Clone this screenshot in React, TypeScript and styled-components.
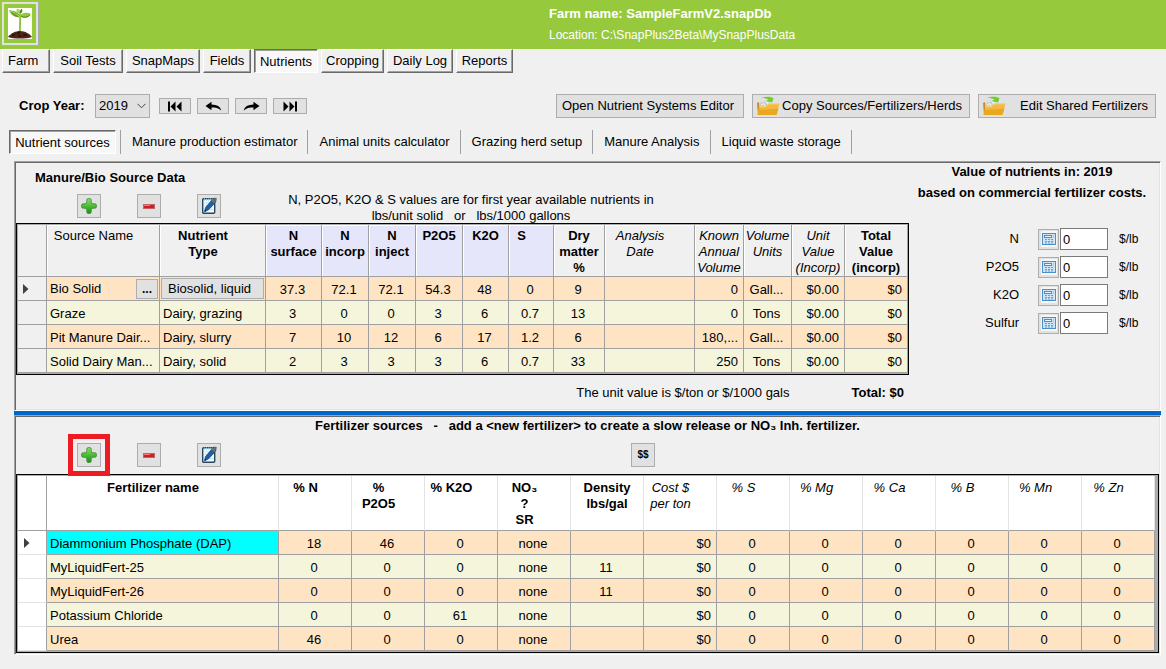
import React from 'react';
import styled, { createGlobalStyle, css } from 'styled-components';

const GlobalStyle = createGlobalStyle`
  * { box-sizing: border-box; }
  body {
    margin: 0;
    background: #f0f0f0;
    color: #000;
    font-family: "Liberation Sans", Arial, sans-serif;
    font-size: 13px;
    line-height: 16px;
  }
  button, input, select { font: inherit; color: inherit; margin: 0; border-radius: 0; }
`;

const Page = styled.div`
  min-width: 1100px;
  padding-bottom: 14px;
`;

const Banner = styled.header`
  display: grid;
  grid-template-columns: 1fr 616px;
  height: 49px;
  padding: 1px;
  background: #97c93d;
  color: #fff;
`;

const LogoButton = styled.button`
  display: grid;
  place-items: center;
  width: 38px;
  height: 45px;
  padding: 0;
  border: 1px solid #adadad;
  box-shadow: inset 0 0 0 2px #e1e1e1;
  background: transparent;
`;

const FarmInfo = styled.div`
  padding-top: 4px;
`;

const FarmName = styled.div`
  font-weight: bold;
  line-height: 18px;
`;

const FarmPath = styled.div`
  padding-top: 4px;
  font-size: 12px;
`;

const MainTabs = styled.nav`
  display: flex;
  gap: 3px;
  padding-left: 2px;
`;

const pressed = css`
  border: 1px solid #fff;
  border-top-color: #696969;
  border-left-color: #696969;
  box-shadow: inset 1px 1px 0 #a0a0a0;
  background: #f8f8f8;
  padding-top: 2px;
`;

const MainTab = styled.button<{ $width: number; $active?: boolean; $start?: boolean }>`
  width: ${(p) => p.$width}px;
  height: 24px;
  padding: 0 ${(p) => (p.$start ? 5 : 0)}px;
  text-align: ${(p) => (p.$start ? 'left' : 'center')};
  white-space: nowrap;
  border: 1px solid #696969;
  border-top-color: #fff;
  border-left-color: #fff;
  box-shadow: inset -1px -1px 0 #a0a0a0;
  background: #f0f0f0;
  ${(p) => p.$active && pressed}
`;

const Toolbar = styled.div`
  display: flex;
  align-items: center;
  padding: 21px 10px 0 19px;
`;

const CropYearLabel = styled.label`
  width: 76px;
  font-weight: bold;
`;

const SelectBox = styled.div`
  position: relative;
  width: 55px;
  margin-right: 9px;

  select {
    display: block;
    width: 100%;
    height: 24px;
    padding: 0 3px;
    appearance: none;
    border: 1px solid #adadad;
    background: #e1e1e1;
  }
  svg {
    position: absolute;
    right: 4px;
    top: 9px;
    pointer-events: none;
  }
`;

const YearButtons = styled.div`
  display: flex;
  gap: 6px;
  margin-right: auto;
`;

const YearButton = styled.button`
  display: grid;
  place-items: center;
  width: 32px;
  height: 16px;
  padding: 0;
  border: 1px solid #adadad;
  background: #e1e1e1;
  &:last-child { width: 34px; }
`;

const Actions = styled.div`
  display: flex;
  gap: 8px;
`;

const ActionButton = styled.button<{ $width: number }>`
  display: flex;
  align-items: center;
  justify-content: space-between;
  width: ${(p) => p.$width}px;
  height: 24px;
  padding: 0 7px 0 ${(p) => (p.$width === 188 ? 5 : 3)}px;
  white-space: nowrap;
  border: 1px solid #adadad;
  background: #e1e1e1;
`;

const SubTabs = styled.nav`
  display: flex;
  padding: 12px 0 7px 9px;
`;

const SubTab = styled.button<{ $active?: boolean }>`
  height: 24px;
  padding: 0 10px 0 11px;
  white-space: nowrap;
  border: 0;
  border-right: 1px solid #a0a0a0;
  background: transparent;
  ${(p) =>
    p.$active &&
    css`
      ${pressed}
      width: 107px;
      padding: 1px 0 0;
    `}
`;

const TabDivider = styled.span`
  width: 1px;
  margin-left: 4px;
  background: #a0a0a0;
`;

const Panels = styled.main`
  margin: 0 5px 0 14px;
`;

const Panel = styled.section`
  border: 1px solid #fff;
  border-top-color: #a0a0a0;
  border-left-color: #a0a0a0;
  box-shadow: inset 1px 1px 0 #696969, inset -1px -1px 0 #e3e3e3;
  padding: 1px;
`;

const ManureBody = styled.div`
  display: grid;
  grid-template-columns: 1fr 246px;
  padding-right: 4px;
  height: 246px;
`;

const ManureHead = styled.div`
  display: grid;
  grid-template-columns: 272px 1fr;
  height: 60px;
`;

const SectionTitle = styled.h2`
  margin: 0;
  font-size: 13px;
  line-height: 18px;
  font-weight: bold;
`;

const ManureTitle = styled(SectionTitle)`
  padding: 6px 0 7px 19px;
`;

const ManureNote = styled.p`
  width: 366px;
  margin: 0;
  padding-top: 29px;
  text-align: center;
  white-space: pre;
`;

const IconButtons = styled.div`
  display: flex;
  align-items: flex-start;
  gap: 36px;
  padding-left: 61px;
`;

const IconButton = styled.button`
  display: grid;
  place-items: center;
  width: 24px;
  height: 24px;
  padding: 0;
  border: 1px solid #adadad;
  background: #e1e1e1;
`;

const Highlight = styled.span`
  outline: 5px solid #ed1c24;
  outline-offset: 4px;
`;

const Splitter = styled.div`
  height: 4px;
  background: #0066cc;
`;

const GridFrame = styled.div<{ $fill?: boolean }>`
  border: 1px solid #000;
  background: #ababab;
  padding: 1px ${(p) => (p.$fill ? 3 : 0)}px 1px 1px;
`;

const Grid = styled.table`
  width: 100%;
  table-layout: fixed;
  border-collapse: separate;
  border-spacing: 0;
`;

const HeadCell = styled.th<{
  $light?: boolean;
  $tint?: boolean;
  $kind?: 'bold' | 'italic' | 'plain';
  $shift?: boolean;
}>`
  height: ${(p) => (p.$light ? 55 : 52)}px;
  padding: ${(p) => (p.$light ? 4 : 3)}px ${(p) => (p.$shift ? 19 : 0)}px 0 0;
  vertical-align: top;
  white-space: pre;
  font-weight: ${(p) => (p.$kind === 'bold' ? 'bold' : 'normal')};
  font-style: ${(p) => (p.$kind === 'italic' ? 'italic' : 'normal')};
  background: ${(p) => (p.$light ? '#fff' : p.$tint ? '#e6e6fa' : '#f0f0f0')};
  border-right: 1px solid ${(p) => (p.$light ? '#e3e3e3' : '#a0a0a0')};
  border-bottom: 1px solid #a0a0a0;
  box-shadow: inset 1px 1px 0 #fff;
`;

const CornerCell = styled.td<{ $light?: boolean }>`
  background: ${(p) => (p.$light ? '#fff' : '#f0f0f0')};
  border-right: 1px solid #a0a0a0;
  border-bottom: 1px solid #a0a0a0;
`;

const MarkerCell = styled.td<{ $light?: boolean }>`
  padding: 0 0 0 ${(p) => (p.$light ? 6 : 5)}px;
  background: ${(p) => (p.$light ? '#fff' : '#f0f0f0')};
  border-right: 1px solid #a0a0a0;
  border-bottom: 1px solid ${(p) => (p.$light ? '#e3e3e3' : '#a0a0a0')};
  svg { display: block; }
`;

const Row = styled.tr`
  background: #f5f5dc;
  &:nth-child(odd) { background: #ffe4c4; }
`;

type Align = 'left' | 'center' | 'right';

const Cell = styled.td<{ $align?: Align; $selected?: boolean; $tight?: boolean }>`
  height: 24px;
  padding: ${(p) => (p.$tight ? '0 1px' : p.$align === 'left' ? '2px 4px 0 3px' : '2px 5px 0 3px')};
  text-align: ${(p) => p.$align || 'center'};
  white-space: nowrap;
  overflow: hidden;
  text-overflow: ellipsis;
  border-right: 1px solid #a0a0a0;
  border-bottom: 1px solid #a0a0a0;
  ${(p) => p.$selected && 'background: #00ffff;'}
`;

const NameWithButton = styled.div`
  display: flex;
  align-items: center;
  justify-content: space-between;
  padding-left: 2px;
`;

const MoreButton = styled.button`
  width: 22px;
  height: 20px;
  padding: 0;
  border: 1px solid #adadad;
  background: #e1e1e1;
  font-size: 12px;
  font-weight: bold;
  line-height: 14px;
`;

const TypeButton = styled.button`
  display: block;
  width: 100%;
  height: 21px;
  padding: 0 6px;
  text-align: left;
  border: 1px solid #adadad;
  background: #e1e1e1;
`;

const Totals = styled.div`
  display: flex;
  justify-content: flex-end;
  gap: 62px;
  padding: 10px 5px 0 0;
`;

const ValuePanel = styled.aside`
  text-align: center;
`;

const ValueTitle = styled(SectionTitle)`
  display: grid;
  gap: 3px;
  padding-bottom: 23px;
  white-space: nowrap;
`;

const ValueRow = styled.div`
  display: grid;
  grid-template-columns: 110px 19px 21px 1px 48px 11px auto;
  align-items: center;
  height: 28px;
  text-align: left;
  label { grid-column: 1; text-align: right; }
`;

const CalcButton = styled.button`
  grid-column: 3;
  display: grid;
  place-items: center;
  width: 21px;
  height: 21px;
  padding: 0;
  border: 1px solid #adadad;
  background: #e1e1e1;
`;

const ValueInput = styled.input`
  grid-column: 5;
  width: 48px;
  height: 22px;
  padding: 0 2px;
  border: 1px solid #7a7a7a;
  background: #fff;
`;

const Unit = styled.span`
  grid-column: 7;
  font-size: 12px;
`;

const FertTitle = styled(SectionTitle)`
  height: 26px;
  text-align: center;
  white-space: pre;
`;

const FertTools = styled.div`
  display: flex;
  height: 31px;
`;

const PriceButton = styled(IconButton)`
  margin-left: 410px;
  font-size: 10px;
  font-weight: bold;
`;

function PlantLogo() {
  return (
    <svg width="24" height="31" viewBox="0 0 24 31" aria-hidden="true">
      <rect width="24" height="31" fill="#fff" />
      <path d="M12 25 C11.4 19 12.8 13 12 6" stroke="#8cbf3a" strokeWidth="1.8" fill="none" />
      <path d="M12 9 C7 10 3 7 1 2 C6 3 11 4 12 9Z" fill="#6aa321" />
      <path d="M2 3 C6 4 9 6 12 9" stroke="#b4dc6a" fill="none" />
      <path d="M12 8 C14 4 20 4 23 6 C20 11 15 11 12 8Z" fill="#93c83d" />
      <path d="M13 8 C16 10 20 9 22 7" stroke="#558c1a" fill="none" />
      <path d="M11.500 6 C8 5 8 2 9 1 C12 1 13 3 11.500 6Z" fill="#a9d45a" />
      <path d="M12 6 C11 3 13 1 14 1 C15 3 14 5 12 6Z" fill="#558c1a" />
      <path d="M0 29 C3 25 8 23 12 23 C17 23 22 26 24 29 C18 31 6 31 0 29Z" fill="#4a2416" />
      <path d="M4 27h3M9 25h3M15 27h4M10 28h3" stroke="#2a110a" strokeWidth="1.400" />
    </svg>
  );
}

function FirstIcon({ flip }: { flip?: boolean }) {
  return (
    <svg width="16" height="11" viewBox="0 0 16 11" aria-hidden="true">
      <g transform={flip ? 'translate(16 0) scale(-1 1)' : undefined}>
        <path d="M1 .5h2v10H1zM3.500 5.500L8.500 .5v10zM9.500 5.500l5-5v10z" fill="#000" />
      </g>
    </svg>
  );
}

function ArrowIcon({ flip }: { flip?: boolean }) {
  return (
    <svg width="17" height="11" viewBox="0 0 17 11" aria-hidden="true">
      <g transform={flip ? 'translate(17 0) scale(-1 1)' : undefined}>
        <path d="M.5 5L6.500 .8v2.600C12 3.500 15.500 5.500 16.300 9.500 C13.500 6.800 10.500 6.500 6.500 6.500v2.700z" fill="#000" />
      </g>
    </svg>
  );
}

function FolderIcon() {
  return (
    <svg width="24" height="20" viewBox="0 0 24 20" aria-hidden="true">
      <path d="M1 7l2-1 1 1-1 11-1 1z" fill="#cf8a22" />
      <path d="M3 6l9-2 5 4 4-1v3l-17 5z" fill="#dde2e6" />
      <path d="M4 7l5-1.500 3 4-8 4z" fill="#c3cad0" />
      <path d="M5 9l3-1.500 1 2.500M10 6l4 4" stroke="#f8fafb" fill="none" />
      <path d="M5.500 2C9 .2 15 .3 17.500 2.200L16 6.500 9.500 5l3-1.300C10.500 2.300 8 1.800 5.500 2z" fill="#72cf2b" />
      <path d="M3.500 10.500l6.500-.5 2-2.500h11.500L20.500 19H1.500z" fill="#f5b942" />
      <path d="M3 14l19.500-1.500-2 6.500H1.500z" fill="#eaa820" />
      <path d="M4 10.800l6.200-.5 2-2.500H23" stroke="#fbd581" fill="none" />
    </svg>
  );
}

function PlusIcon() {
  return (
    <svg width="16" height="16" viewBox="0 0 16 16" aria-hidden="true">
      <defs>
        <linearGradient id="plus-fill" x1="0" y1="0" x2="0" y2="1">
          <stop offset="0" stopColor="#8be06c" />
          <stop offset=".5" stopColor="#4dbb35" />
          <stop offset="1" stopColor="#1f8f17" />
        </linearGradient>
      </defs>
      <path d="M6 1q2-1 4 0l.5 4.500L15 6q1 2 0 4l-4.500.5L10 15q-2 1-4 0l-.5-4.500L1 10Q0 8 1 6l4.500-.5z" fill="url(#plus-fill)" stroke="#3f8d37" strokeWidth=".8" />
    </svg>
  );
}

function MinusIcon() {
  return (
    <svg width="12" height="5" viewBox="0 0 12 5" aria-hidden="true">
      <rect x=".5" y=".5" width="11" height="4" fill="#cc1f26" stroke="#c06468" />
      <path d="M1 1.500h6" stroke="#ea7d7f" />
    </svg>
  );
}

function EditIcon() {
  return (
    <svg width="16" height="18" viewBox="0 0 16 18" aria-hidden="true">
      <rect x="1.700" y="1.700" width="12" height="14.600" rx="1" fill="#f2f8fb" stroke="#24485c" strokeWidth="1.400" />
      <path d="M3 2.500h9" stroke="#8cc4de" strokeWidth="2" strokeDasharray="1 1" />
      <path d="M3.500 6h6M3.500 8.500h4M9 12.500h3.500" stroke="#c8dfe9" />
      <path d="M3.500 14.800l.8-4L10 4l3.300 2.700L7.400 13z" fill="#1c5fae" stroke="#123a66" strokeWidth=".6" />
      <path d="M10 4l2-2.600 3.300-.2-.4 3.200-1.600 2.300z" fill="#64727d" stroke="#36444e" strokeWidth=".6" />
      <path d="M3.500 14.800l.5-2 1.300 1.100z" fill="#101820" />
    </svg>
  );
}

function CalcIcon() {
  return (
    <svg width="16" height="16" viewBox="0 0 16 16" aria-hidden="true">
      <rect width="16" height="16" fill="#f4f6f8" />
      <rect x="1.500" y="2.500" width="13" height="11" fill="#cfe3f2" stroke="#4a8fc7" />
      <rect x="3.500" y="4.500" width="7" height="2" fill="#eaf5fc" stroke="#4a8fc7" />
      <path d="M4 8.500h9M4 10.500h9M4 12h9" stroke="#6b9fcb" strokeDasharray="2 1" />
      <path d="M12 4h1v3h-1z" fill="#a9cde8" />
    </svg>
  );
}

function RowMarker() {
  return (
    <svg width="6" height="10" viewBox="0 0 6 10" aria-hidden="true">
      <path d="M0 0l5.500 5L0 10z" fill="#404040" />
    </svg>
  );
}

type Column = {
  label: string;
  width?: number;
  kind?: 'bold' | 'italic' | 'plain';
  tint?: boolean;
  shift?: boolean;
  align?: Align;
};

const sourceColumns: Column[] = [
  { label: 'Source Name', kind: 'plain', shift: true, align: 'left' },
  { label: 'Nutrient\nType', width: 106, kind: 'bold', shift: true, align: 'left' },
  { label: 'N\nsurface', width: 56, kind: 'bold', tint: true },
  { label: 'N\nincorp', width: 47, kind: 'bold', tint: true },
  { label: 'N\ninject', width: 47, kind: 'bold', tint: true },
  { label: 'P2O5', width: 47, kind: 'bold', tint: true },
  { label: 'K2O', width: 46, kind: 'bold', tint: true },
  { label: 'S', width: 45, kind: 'bold', tint: true, shift: true },
  { label: 'Dry\nmatter\n%', width: 51, kind: 'bold' },
  { label: 'Analysis\nDate', width: 90, kind: 'italic', shift: true },
  { label: 'Known\nAnnual\nVolume', width: 49, kind: 'italic', align: 'right' },
  { label: 'Volume\nUnits', width: 48, kind: 'italic' },
  { label: 'Unit\nValue\n(Incorp)', width: 53, kind: 'italic', align: 'right' },
  { label: 'Total\nValue\n(incorp)', width: 63, kind: 'bold', align: 'right' },
];

const sourceRows: string[][] = [
  ['Bio Solid', 'Biosolid, liquid', '37.3', '72.1', '72.1', '54.3', '48', '0', '9', '', '0', 'Gall...', '$0.00', '$0'],
  ['Graze', 'Dairy, grazing', '3', '0', '0', '3', '6', '0.7', '13', '', '0', 'Tons', '$0.00', '$0'],
  ['Pit Manure Dair...', 'Dairy, slurry', '7', '10', '12', '6', '17', '1.2', '6', '', '180,...', 'Gall...', '$0.00', '$0'],
  ['Solid Dairy Man...', 'Dairy, solid', '2', '3', '3', '3', '6', '0.7', '33', '', '250', 'Tons', '$0.00', '$0'],
];

const fertColumns: Column[] = [
  { label: 'Fertilizer name', width: 232, kind: 'bold', shift: true, align: 'left' },
  { label: '% N', kind: 'bold', shift: true },
  { label: '%\nP2O5', kind: 'bold', shift: true },
  { label: '% K2O', kind: 'bold', shift: true },
  { label: 'NO₃\n?\nSR', kind: 'bold', shift: true },
  { label: 'Density\nlbs/gal', kind: 'bold' },
  { label: 'Cost $\nper ton', kind: 'italic', shift: true, align: 'right' },
  { label: '% S', kind: 'italic', shift: true },
  { label: '% Mg', kind: 'italic', shift: true },
  { label: '% Ca', kind: 'italic', shift: true },
  { label: '% B', kind: 'italic', shift: true },
  { label: '% Mn', kind: 'italic', shift: true },
  { label: '% Zn', kind: 'italic', shift: true },
];

const zeros = ['0', '0', '0', '0', '0', '0'];
const fertRows: string[][] = [
  ['Diammonium Phosphate (DAP)', '18', '46', '0', 'none', '', '$0', ...zeros],
  ['MyLiquidFert-25', '0', '0', '0', 'none', '11', '$0', ...zeros],
  ['MyLiquidFert-26', '0', '0', '0', 'none', '11', '$0', ...zeros],
  ['Potassium Chloride', '0', '0', '61', 'none', '', '$0', ...zeros],
  ['Urea', '46', '0', '0', 'none', '', '$0', ...zeros],
];

function DataGrid({ columns, rows, light }: { columns: Column[]; rows: string[][]; light?: boolean }) {
  return (
    <GridFrame $fill={light}>
      <Grid>
        <colgroup>
          <col width={29} />
          {columns.map((c) => (
            <col key={c.label} width={c.width} />
          ))}
        </colgroup>
        <thead>
          <tr>
            <CornerCell $light={light} />
            {columns.map((c) => (
              <HeadCell key={c.label} scope="col" $light={light} $tint={c.tint} $kind={c.kind} $shift={c.shift}>
                {c.label}
              </HeadCell>
            ))}
          </tr>
        </thead>
        <tbody>
          {rows.map((row, r) => (
            <Row key={row[0]}>
              <MarkerCell $light={light}>{r === 0 && <RowMarker />}</MarkerCell>
              {row.map((value, i) => {
                const editing = !light && r === 0 && i < 2;
                return (
                  <Cell key={i} $align={columns[i].align} $selected={light && r === 0 && i === 0} $tight={editing}>
                    {editing && i === 0 && (
                      <NameWithButton>
                        {value}
                        <MoreButton aria-label="Choose source">...</MoreButton>
                      </NameWithButton>
                    )}
                    {editing && i === 1 && <TypeButton>{value}</TypeButton>}
                    {!editing && value}
                  </Cell>
                );
              })}
            </Row>
          ))}
        </tbody>
      </Grid>
    </GridFrame>
  );
}

const mainTabs: [string, number][] = [
  ['Farm', 48],
  ['Soil Tests', 70],
  ['SnapMaps', 74],
  ['Fields', 48],
  ['Nutrients', 64],
  ['Cropping', 63],
  ['Daily Log', 66],
  ['Reports', 57],
];

const subTabs = [
  'Manure production estimator',
  'Animal units calculator',
  'Grazing herd setup',
  'Manure Analysis',
  'Liquid waste storage',
];

export default function App() {
  return (
    <Page>
      <GlobalStyle />
      <Banner>
        <LogoButton aria-label="Home">
          <PlantLogo />
        </LogoButton>
        <FarmInfo>
          <FarmName>Farm name: SampleFarmV2.snapDb</FarmName>
          <FarmPath>Location: C:\SnapPlus2Beta\MySnapPlusData</FarmPath>
        </FarmInfo>
      </Banner>

      <MainTabs>
        {mainTabs.map(([label, width]) => (
          <MainTab key={label} $width={width} $active={label === 'Nutrients'} $start={label === 'Farm'}>
            {label}
          </MainTab>
        ))}
      </MainTabs>

      <Toolbar>
        <CropYearLabel htmlFor="crop-year">Crop Year:</CropYearLabel>
        <SelectBox>
          <select id="crop-year" defaultValue="2019">
            <option>2019</option>
          </select>
          <svg width="9" height="6" viewBox="0 0 9 6" aria-hidden="true">
            <path d="M.5 .8l4 4 4-4" fill="none" stroke="#444" />
          </svg>
        </SelectBox>
        <YearButtons>
          <YearButton aria-label="First year"><FirstIcon /></YearButton>
          <YearButton aria-label="Previous year"><ArrowIcon /></YearButton>
          <YearButton aria-label="Next year"><ArrowIcon flip /></YearButton>
          <YearButton aria-label="Last year"><FirstIcon flip /></YearButton>
        </YearButtons>
        <Actions>
          <ActionButton $width={188}>Open Nutrient Systems Editor</ActionButton>
          <ActionButton $width={218}>
            <FolderIcon />
            Copy Sources/Fertilizers/Herds
          </ActionButton>
          <ActionButton $width={178}>
            <FolderIcon />
            Edit Shared Fertilizers
          </ActionButton>
        </Actions>
      </Toolbar>

      <SubTabs>
        <SubTab $active>Nutrient sources</SubTab>
        <TabDivider />
        {subTabs.map((label) => (
          <SubTab key={label}>{label}</SubTab>
        ))}
      </SubTabs>

      <Panels>
        <Panel>
          <ManureBody>
            <div>
              <ManureHead>
                <div>
                  <ManureTitle>Manure/Bio Source Data</ManureTitle>
                  <IconButtons>
                    <IconButton aria-label="Add source"><PlusIcon /></IconButton>
                    <IconButton aria-label="Remove source"><MinusIcon /></IconButton>
                    <IconButton aria-label="Edit source"><EditIcon /></IconButton>
                  </IconButtons>
                </div>
                <ManureNote>
                  {'N, P2O5, K2O & S values are for first year available nutrients in\nlbs/unit solid   or   lbs/1000 gallons'}
                </ManureNote>
              </ManureHead>
              <DataGrid columns={sourceColumns} rows={sourceRows} />
              <Totals>
                <span>The unit value is $/ton or $/1000 gals</span>
                <b>Total: $0</b>
              </Totals>
            </div>
            <ValuePanel>
              <ValueTitle>
                <span>Value of nutrients in: 2019</span>
                <span>based on commercial fertilizer costs.</span>
              </ValueTitle>
              {['N', 'P2O5', 'K2O', 'Sulfur'].map((name) => (
                <ValueRow key={name}>
                  <label htmlFor={`value-${name}`}>{name}</label>
                  <CalcButton aria-label={`Calculate ${name}`}><CalcIcon /></CalcButton>
                  <ValueInput id={`value-${name}`} defaultValue="0" />
                  <Unit>$/lb</Unit>
                </ValueRow>
              ))}
            </ValuePanel>
          </ManureBody>
        </Panel>
        <Splitter />
        <Panel>
          <FertTitle>
            {'Fertilizer sources   -   add a <new fertilizer> to create a slow release or NO₃ Inh. fertilizer.'}
          </FertTitle>
          <FertTools>
            <IconButtons>
              <Highlight>
                <IconButton aria-label="Add fertilizer"><PlusIcon /></IconButton>
              </Highlight>
              <IconButton aria-label="Remove fertilizer"><MinusIcon /></IconButton>
              <IconButton aria-label="Edit fertilizer"><EditIcon /></IconButton>
            </IconButtons>
            <PriceButton>$$</PriceButton>
          </FertTools>
          <DataGrid columns={fertColumns} rows={fertRows} light />
        </Panel>
      </Panels>
    </Page>
  );
}
